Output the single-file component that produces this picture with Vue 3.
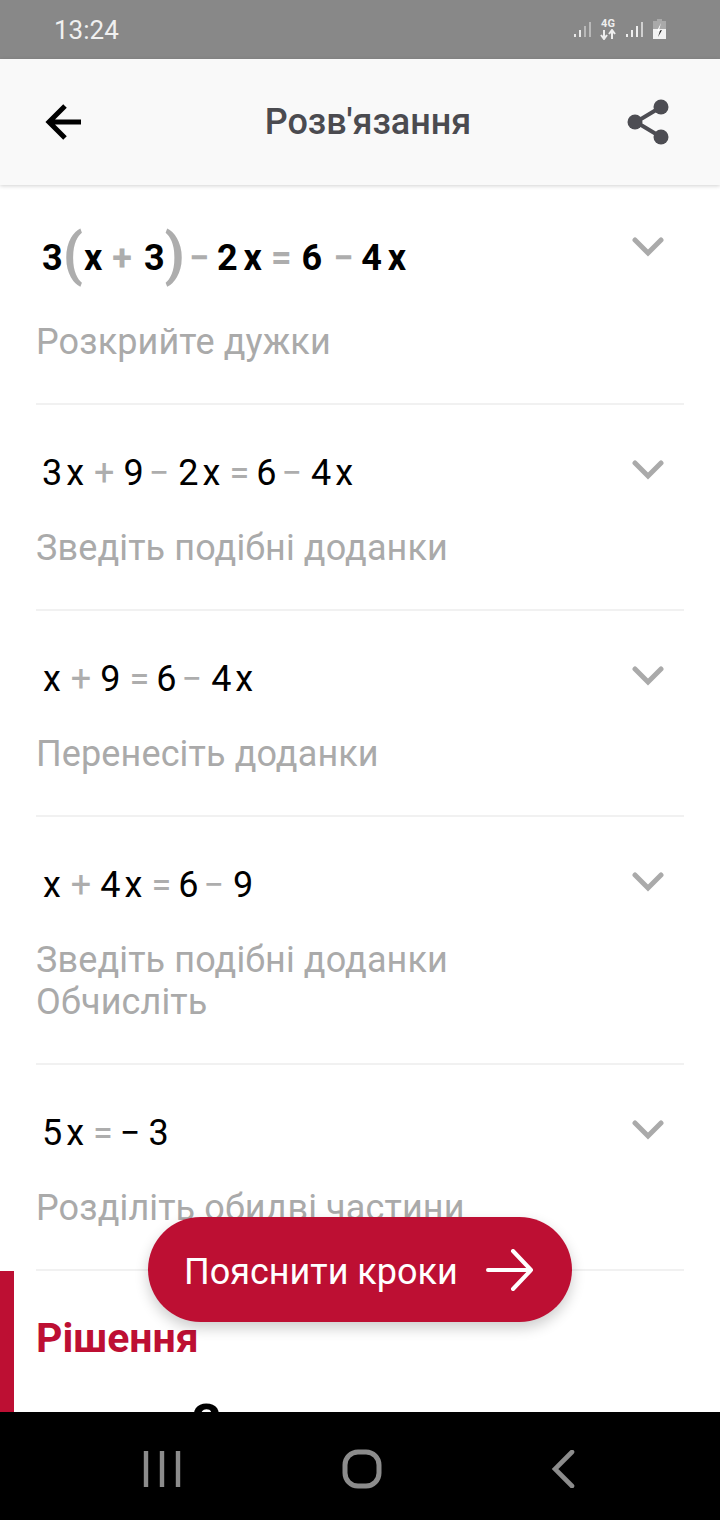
<template>
  <div class="phone">
    <div class="status-bar">
      <span class="time">13:24</span>
      <div class="status-icons">
        <svg class="signal" width="18" height="18" viewBox="0 0 18 18">
          <path d="M2 16v-3M7 16V9M12 16V5M17 16V1" stroke="#b9b9b9" stroke-width="2" />
          <path d="M2 16v-3M7 16V9" stroke="#e8e8e8" stroke-width="2" />
        </svg>
        <div class="net">
          <span class="net-label">4G</span>
          <svg width="16" height="11" viewBox="0 0 16 11">
            <path d="M4 1v8M1 6l3 4 3-4M12 10V2M9 5l3-4 3 4" fill="none" stroke="#eee" stroke-width="2" />
          </svg>
        </div>
        <svg class="signal" width="18" height="18" viewBox="0 0 18 18">
          <path d="M2 16v-3M7 16V9M12 16V5" stroke="#eee" stroke-width="2" />
          <path d="M17 16V1" stroke="#d0d0d0" stroke-width="2" />
        </svg>
        <svg class="battery" width="15" height="21" viewBox="0 0 15 21">
          <path d="M5 0h5v2H5z" fill="#a9a9a9" />
          <path d="M1 2h13v8H1z" fill="#a9a9a9" />
          <path d="M1 10h13v10H1z" fill="#f2f2f2" />
          <path d="M9 4 5 12h3l-2 6 4-7H7z" fill="#fff" />
          <path d="M8 11.5 6 18l4-7z" fill="#222" />
        </svg>
      </div>
    </div>

    <header class="toolbar">
      <svg class="back" width="38" height="38" viewBox="0 0 38 38">
        <path d="M37 19H5M21 3 5 19l16 16" fill="none" stroke="#000" stroke-width="5" />
      </svg>
      <h1 class="title">Розв'язання</h1>
      <svg class="share" width="44" height="48" viewBox="0 0 44 48">
        <path d="M34 9 9 24l25 15" fill="none" stroke="#4d4d53" stroke-width="4" />
        <circle cx="34" cy="9" r="7.5" fill="#4d4d53" />
        <circle cx="8" cy="24" r="7.5" fill="#4d4d53" />
        <circle cx="34" cy="39" r="7.5" fill="#4d4d53" />
      </svg>
    </header>

    <main class="content">
      <section
        v-for="(step, i) in steps"
        :key="i"
        class="step"
        :class="{ first: i === 0 }"
      >
        <div class="step-head">
          <div class="math">
            <span
              v-for="(t, j) in step.tokens"
              :key="j"
              :class="t.cls"
              >{{ t.text }}</span
            >
          </div>
          <svg class="chevron" width="32" height="20" viewBox="0 0 32 20">
            <path d="M3 3l13 13L29 3" fill="none" stroke="#aaa" stroke-width="5" stroke-linecap="round" />
          </svg>
        </div>
        <p class="hint" v-for="line in step.hint" :key="line">{{ line }}</p>
      </section>

      <section class="solution">
        <h2 class="solution-title">Рішення</h2>
        <div class="answer">3</div>
      </section>

      <button class="explain">
        <span class="explain-label">Пояснити кроки</span>
        <svg width="48" height="42" viewBox="0 0 48 42">
          <path d="M2 21h43M27 2l18 19-18 19" fill="none" stroke="#fff" stroke-width="4" stroke-linecap="round" stroke-linejoin="round" />
        </svg>
      </button>
    </main>

    <nav class="nav-bar">
      <svg width="38" height="38" viewBox="0 0 38 38">
        <path d="M3 1v36M19 1v36M35 1v36" stroke="#8c8c8c" stroke-width="4.4" />
      </svg>
      <svg class="home" width="40" height="40" viewBox="0 0 40 40">
        <rect x="3" y="3" width="34" height="34" rx="13" fill="none" stroke="#8c8c8c" stroke-width="5" />
      </svg>
      <svg width="24" height="38" viewBox="0 0 24 38">
        <path d="M21 2 4 19l17 17" fill="none" stroke="#8c8c8c" stroke-width="4.6" stroke-linecap="round" />
      </svg>
    </nav>
  </div>
</template>

<script setup>
// splits an expression like "3x + 9" into styled tokens
function tokens(expr) {
  return expr.split(' ').map((text) => {
    if (text === '(' || text === ')') return { text, cls: 'paren' }
    if (text === '−') return { text, cls: 'op minus' }
    if (text === '=') return { text, cls: 'op equals' }
    if (text === '+') return { text, cls: 'op plus' }
    if (text === 'x') return { text, cls: 'var' }
    if (text === '~') return { text: '−', cls: 'neg' }
    return { text, cls: 'num' }
  })
}

const steps = [
  { tokens: tokens('3 ( x + 3 ) − 2 x = 6 − 4 x'), hint: ['Розкрийте дужки'] },
  { tokens: tokens('3 x + 9 − 2 x = 6 − 4 x'), hint: ['Зведіть подібні доданки'] },
  { tokens: tokens('x + 9 = 6 − 4 x'), hint: ['Перенесіть доданки'] },
  { tokens: tokens('x + 4 x = 6 − 9'), hint: ['Зведіть подібні доданки', 'Обчисліть'] },
  { tokens: tokens('5 x = ~ 3'), hint: ['Розділіть обидві частини'] },
]
</script>

<style>
body {
  margin: 0;
  background: #fff;
}
</style>

<style scoped>
.phone {
  width: 720px;
  height: 1520px;
  display: flex;
  flex-direction: column;
  overflow: hidden;
  font-family: Roboto, "Noto Sans", sans-serif;
  background: #fff;
}

.status-bar {
  height: 59px;
  flex: none;
  background: #888;
  display: flex;
  align-items: center;
  justify-content: space-between;
  padding: 0 53px 0 54px;
}
.time {
  color: #f0f0f0;
  font-size: 26px;
}
.status-icons {
  display: flex;
  align-items: center;
  gap: 9px;
}
.net {
  display: flex;
  flex-direction: column;
  align-items: center;
  width: 16px;
}
.net-label {
  color: #eee;
  font-size: 11px;
  font-weight: 700;
  line-height: 10px;
}

.toolbar {
  height: 126px;
  flex: none;
  box-sizing: border-box;
  background: #f9f9f9;
  box-shadow: 0 1px 4px rgba(0, 0, 0, 0.18);
  position: relative;
  z-index: 1;
  display: flex;
  align-items: center;
  justify-content: space-between;
  padding: 0 49px 0 44px;
}
.title {
  margin: 0 0 0 27px;
  font-size: 36px;
  font-weight: 500;
  color: #4b4b50;
}

.content {
  flex: 1;
  min-height: 0;
  position: relative;
  overflow: hidden;
}

.step {
  margin: 0 36px;
  padding: 42px 0 40px;
  border-bottom: 2px solid #f1f1f1;
  box-sizing: border-box;
}
.step.first {
  padding-top: 39px;
}
.step-head {
  display: flex;
  justify-content: space-between;
  align-items: flex-start;
  margin-bottom: 28px;
}
.first .step-head {
  margin-bottom: 29px;
}
.math {
  display: flex;
  align-items: center;
  height: 52px;
  padding-left: 6px;
  font-size: 36px;
  color: #000;
}
.first .math {
  height: 68px;
  font-weight: 700;
}
.op {
  color: #adadad;
}
.plus {
  margin: 0 9px 0 10px;
}
.minus {
  margin: 0 9px 0 5px;
}
.equals {
  margin: 0 7px 0 9px;
}
.first .plus {
  margin-right: 12px;
}
.first .minus {
  margin: 0 8px 0 11px;
}
.first .equals {
  margin: 0 10px 0 9px;
}
.var {
  margin-left: 4px;
}
.first .var {
  margin-left: 6px;
}
.var:first-child {
  margin-left: 1px;
}
.neg {
  margin-right: 8px;
}
.op + .var {
  margin-left: 0;
}
.paren {
  color: #adadad;
  font-size: 58px;
  font-weight: 700;
  line-height: 60px;
  margin: 0 -1px 8px 0;
}
.first .paren + .var {
  margin-left: 2px;
}
.first .paren + .op {
  margin-left: 5px;
}
.chevron {
  margin: 13px 20px 0 0;
}
.hint {
  margin: 0;
  font-size: 36px;
  line-height: 42px;
  letter-spacing: 0.12px;
  color: #aaa;
}

.solution {
  border-left: 14px solid #bd0f33;
  padding: 46px 0 0 22px;
}
.solution-title {
  margin: 0;
  font-size: 41px;
  line-height: 42px;
  font-weight: 700;
  color: #bd0f33;
}
.answer {
  margin: 35px 0 0 156px;
  font-size: 52px;
  font-weight: 700;
  line-height: 60px;
  color: #000;
}

.explain {
  position: absolute;
  left: 148px;
  bottom: 90px;
  width: 424px;
  height: 105px;
  border: 0;
  border-radius: 53px;
  background: #bd0f33;
  color: #fff;
  font-family: inherit;
  font-size: 36px;
  display: flex;
  align-items: center;
  gap: 28px;
  padding: 0 0 0 36px;
  box-shadow: 0 6px 14px rgba(0, 0, 0, 0.2);
}
.explain-label {
  padding-top: 4px;
}

.nav-bar {
  height: 108px;
  flex: none;
  box-sizing: border-box;
  background: #000;
  display: flex;
  align-items: center;
  padding: 6px 145px 0 143px;
  justify-content: space-between;
}
.home {
  margin-right: 8px;
}
</style>
